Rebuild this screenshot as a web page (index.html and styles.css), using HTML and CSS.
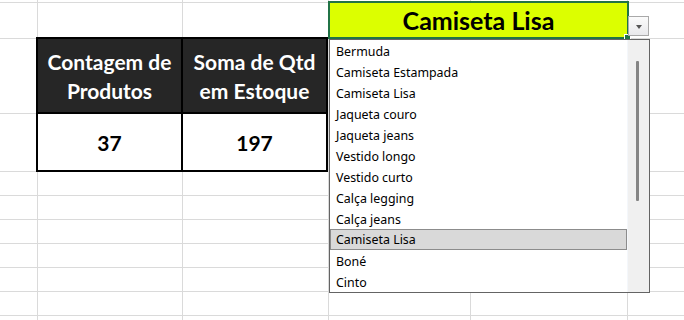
FILE: index.html
```html
<!DOCTYPE html>
<html lang="pt-BR">
  <head>
    <meta charset="UTF-8" />
    <title>Contagem de Produtos</title>
    <link rel="stylesheet" href="styles.css">
  </head>
  <body>
    <div class="sheet">
      <div class="counts">
        <div class="head">Contagem de<br />Produtos</div>
        <div class="head">Soma de Qtd<br />em Estoque</div>
        <div class="val">37</div>
        <div class="val">197</div>
      </div>
      <div class="pick">Camiseta Lisa</div>

      <div class="drop-btn"><span class="arrow"></span></div>
      <div class="list">
        <ul class="items">
          <li>Bermuda</li>
          <li>Camiseta Estampada</li>
          <li>Camiseta Lisa</li>
          <li>Jaqueta couro</li>
          <li>Jaqueta jeans</li>
          <li>Vestido longo</li>
          <li>Vestido curto</li>
          <li>Calça legging</li>
          <li>Calça jeans</li>
          <li class="sel">Camiseta Lisa</li>
          <li>Boné</li>
          <li>Cinto</li>
        </ul>
        <div class="scroll"><span class="thumb"></span></div>
      </div>
    </div>
  </body>
</html>
```

FILE: styles.css
```css
* {
  box-sizing: border-box;
}
body {
  margin: 0;
  background: white;
}
.sheet {
  position: relative;
  width: 684px;
  height: 320px;
  overflow: hidden;
  display: grid;
  grid-template-columns: 37px 145px 146px 142px 157px 1fr;
  grid-template-rows: 2px 36px 75px 58px repeat(6, 24px);
  background:
    linear-gradient(#dadada, #dadada) 37px 0 / 1px 100% no-repeat,
    linear-gradient(#dadada, #dadada) 182px 0 / 1px 100% no-repeat,
    linear-gradient(#dadada, #dadada) 328px 0 / 1px 100% no-repeat,
    linear-gradient(#dadada, #dadada) 470px 0 / 1px 100% no-repeat,
    linear-gradient(#dadada, #dadada) 627px 0 / 1px 100% no-repeat,
    linear-gradient(#dadada, #dadada) 0 2px / 100% 1px no-repeat,
    linear-gradient(#dadada, #dadada) 0 38px / 100% 1px no-repeat,
    linear-gradient(#dadada, #dadada) 0 113px / 100% 1px no-repeat,
    repeating-linear-gradient(#dadada 0 1px, transparent 1px 24px) 0 171px / 100% 149px no-repeat;
}

/* tabela dinamica */
.counts {
  grid-column: 2 / 4;
  grid-row: 3 / 5;
  margin: -1px 0 -1px -1px;
  display: grid;
  grid-template-columns: 1fr 1fr;
  grid-template-rows: 73px 1fr;
  gap: 2px;
  border: 2px solid #000;
  background: #000;
  font-family: Lato, sans-serif;
  font-weight: bold;
  font-size: 21px;
}
.head {
  background: #262626;
  color: white;
  line-height: 29px;
  display: flex;
  align-items: center;
  justify-content: center;
  text-align: center;
}
.val {
  background: white;
  color: black;
  display: flex;
  align-items: center;
  justify-content: center;
}

/* celula com validacao */
.pick {
  grid-column: 4 / 6;
  grid-row: 2 / 3;
  margin: -1px -2px -1px 0;
  position: relative;
  border: 2px solid #217346;
  background: #dcff00;
  font-family: Lato, sans-serif;
  font-weight: bold;
  font-size: 25px;
  display: flex;
  align-items: center;
  justify-content: center;
}
.pick::after {
  content: "";
  position: absolute;
  right: -4px;
  bottom: -4px;
  width: 5px;
  height: 5px;
  background: #217346;
  border: 1px solid white;
}
.drop-btn {
  position: absolute;
  left: 628px;
  top: 16px;
  width: 21px;
  height: 20px;
  border: 1px solid #a9a9a9;
  background: linear-gradient(#fbfbfb, #e9e9ec);
  display: flex;
  align-items: center;
  justify-content: center;
}
.arrow {
  width: 0;
  height: 0;
  border-left: 3.5px solid transparent;
  border-right: 3.5px solid transparent;
  border-top: 4px solid #555;
  margin-top: 1px;
}

/* lista suspensa */
.list {
  position: absolute;
  left: 329px;
  top: 39px;
  width: 321px;
  height: 254px;
  border: 1px solid #646464;
  background: white;
  display: flex;
  font-family: "Noto Sans", sans-serif;
  font-size: 12.4px;
  color: #000;
}
.items {
  list-style: none;
  margin: 0;
  padding: 0;
  width: 298px;
  border-right: 1px solid #f4f7fb;
}
.items li {
  height: 21px;
  padding-top: 2px;
  line-height: 19px;
  padding-left: 6px;
  white-space: nowrap;
}
.items .sel {
  background: #d9d9d9;
  border: 1px solid #8c8c8c;
  padding-top: 1px;
  padding-left: 5px;
  line-height: 18px;
}
.scroll {
  flex: 1;
  position: relative;
  background: #f0f0f0;
}
.thumb {
  position: absolute;
  left: 8px;
  top: 21px;
  width: 3px;
  height: 140px;
  border-radius: 1px;
  background: #858585;
}
```
